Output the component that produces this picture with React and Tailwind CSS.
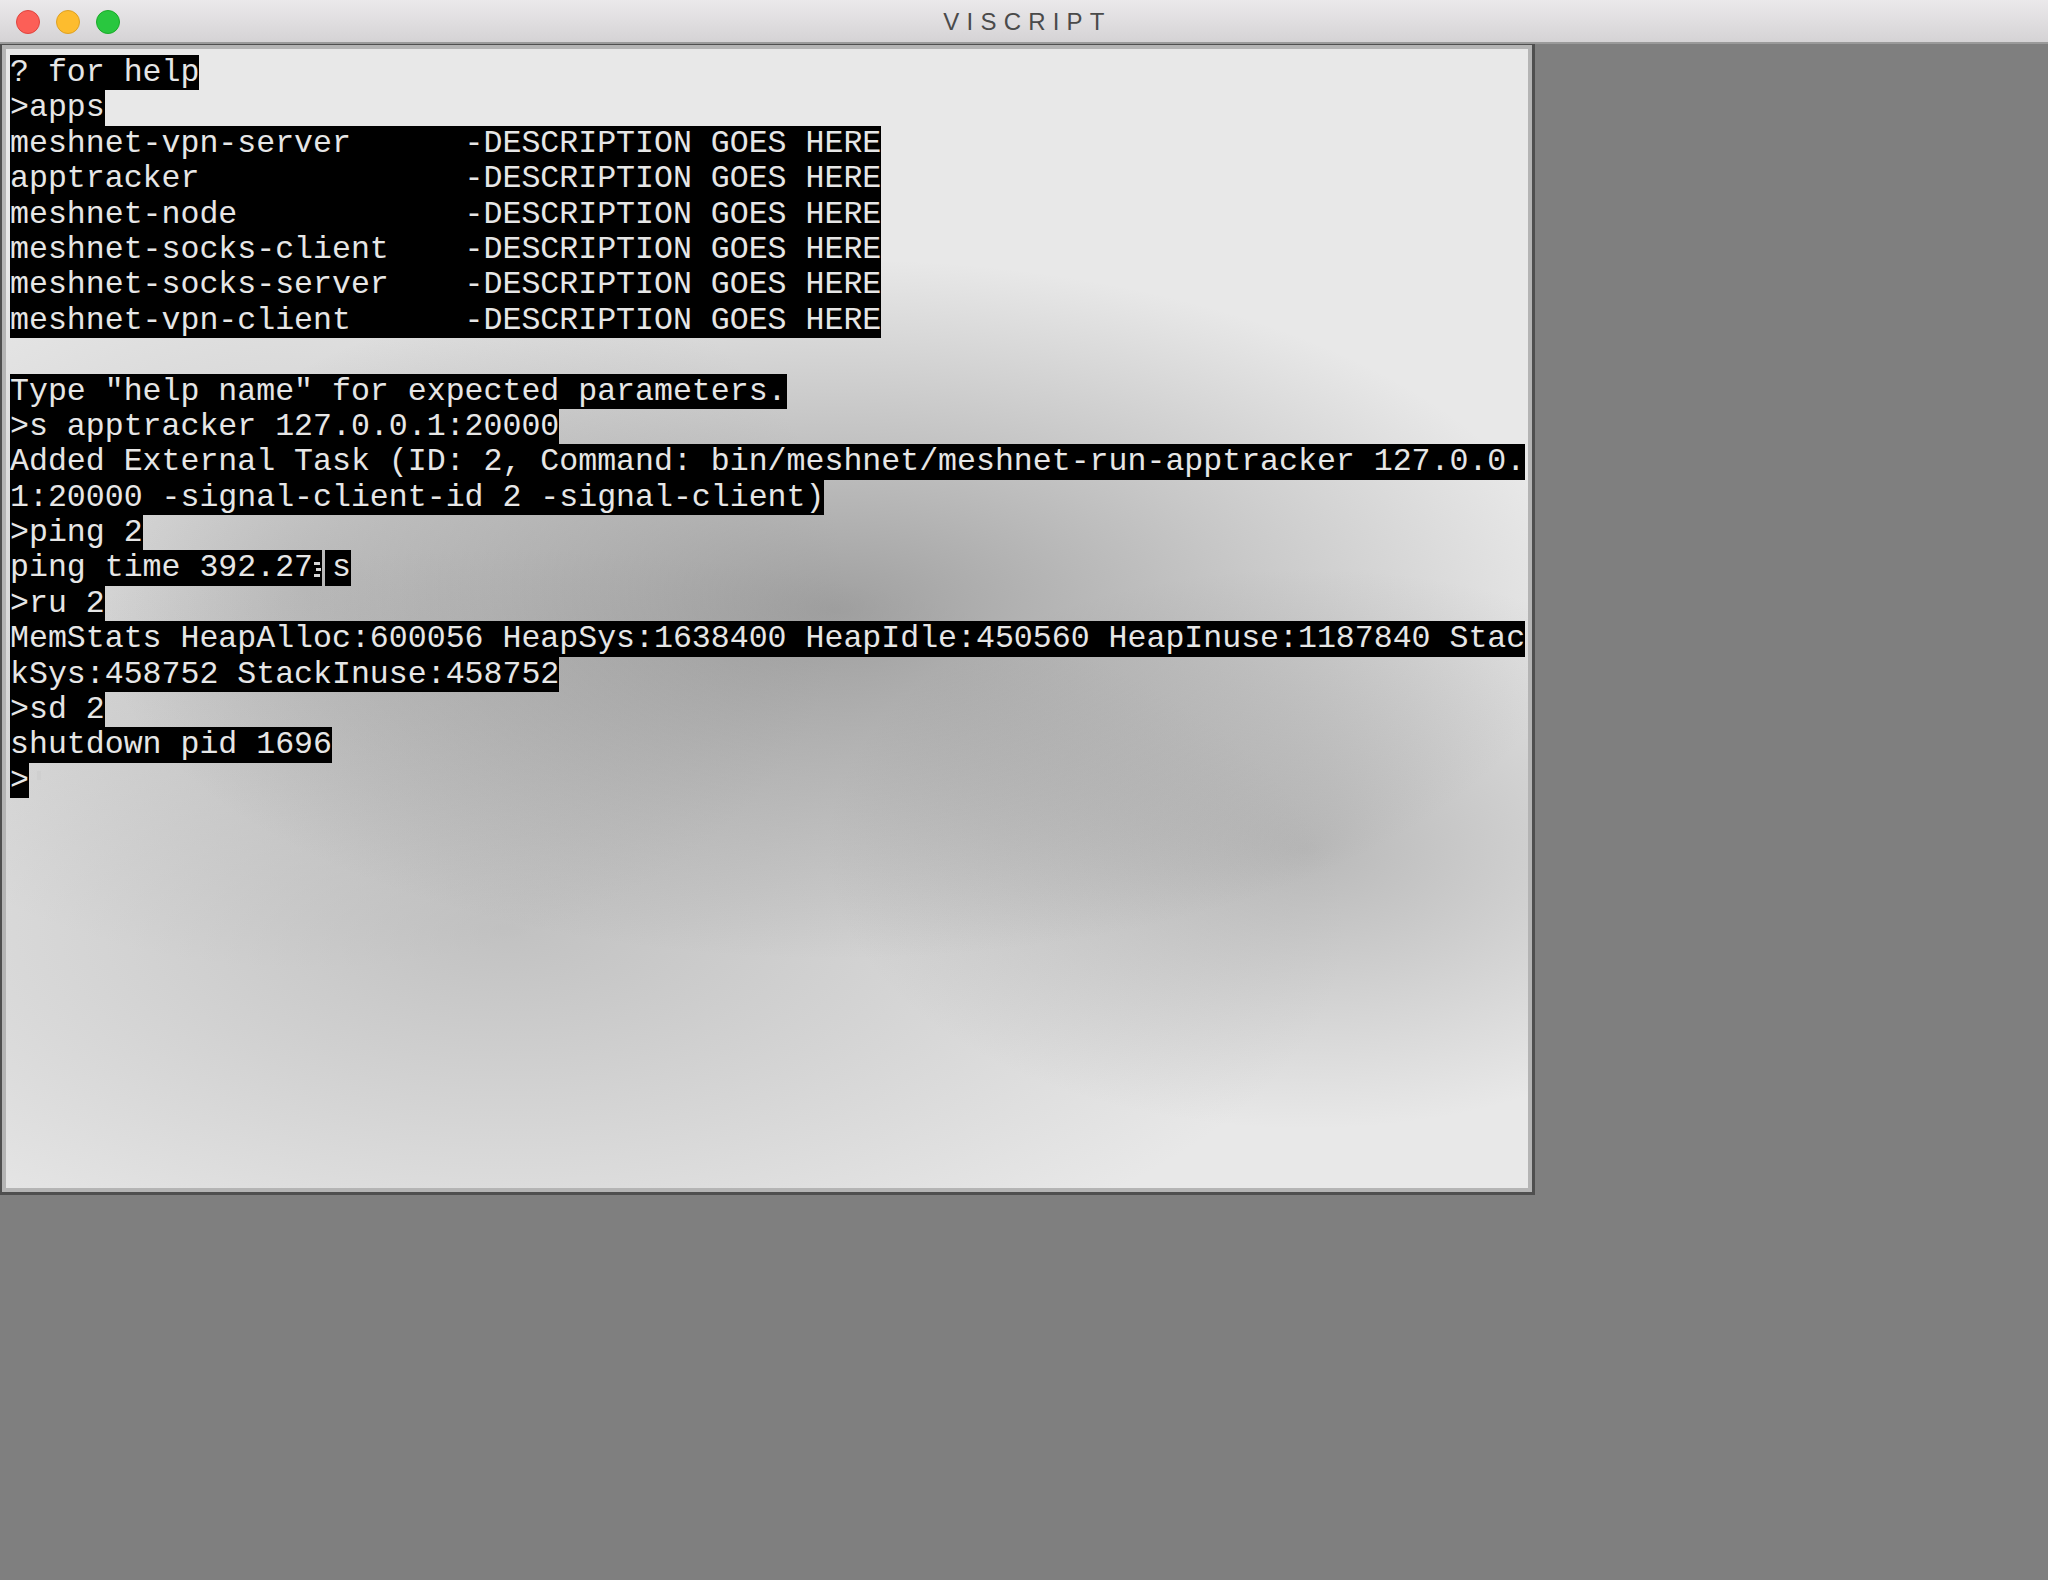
import React from "react";

const mono = "font-['Liberation_Mono','DejaVu_Sans_Mono',monospace]";

const pad = (s, n) => s + " ".repeat(Math.max(0, n - s.length));

const apps = [
  "meshnet-vpn-server",
  "apptracker",
  "meshnet-node",
  "meshnet-socks-client",
  "meshnet-socks-server",
  "meshnet-vpn-client",
];

function Line({ children }) {
  return <div className="h-[35.4px] flex items-stretch">{children}</div>;
}

function Hi({ children }) {
  return (
    <span className="inline-block bg-black text-[#e6e6e6] whitespace-pre leading-[35.4px] h-full">
      {children}
    </span>
  );
}

export default function App() {
  const lines = [
    "? for help",
    ">apps",
    ...apps.map((a) => pad(a, 24) + "-DESCRIPTION GOES HERE"),
    null,
    'Type "help name" for expected parameters.',
    ">s apptracker 127.0.0.1:20000",
    "Added External Task (ID: 2, Command: bin/meshnet/meshnet-run-apptracker 127.0.0.",
    "1:20000 -signal-client-id 2 -signal-client)",
    ">ping 2",
    "PING",
    ">ru 2",
    "MemStats HeapAlloc:600056 HeapSys:1638400 HeapIdle:450560 HeapInuse:1187840 Stac",
    "kSys:458752 StackInuse:458752",
    ">sd 2",
    "shutdown pid 1696",
    "CURSOR",
  ];

  return (
    <div className="w-[2048px] h-[1580px] bg-[#7f7f7f] flex flex-col overflow-hidden">
      {/* title bar */}
      <div className="h-[44px] w-full shrink-0 bg-gradient-to-b from-[#ebe9eb] to-[#d5d3d5] border-b-[2px] border-[#9a9a9a] relative flex items-center justify-center">
        <div className="absolute left-[16px] top-[10px] flex gap-[16px]">
          <div className="w-[24px] h-[24px] rounded-full bg-[#fc5f57] border border-[#e0443e]" />
          <div className="w-[24px] h-[24px] rounded-full bg-[#fdbc2e] border border-[#dea123]" />
          <div className="w-[24px] h-[24px] rounded-full bg-[#29c73f] border border-[#1aab29]" />
        </div>
        <span className="text-[24px] tracking-[0.3em] text-[#4a4a4a] font-['Liberation_Sans',Arial,sans-serif] pl-[7px] pt-[2px]">
          VISCRIPT
        </span>
      </div>

      {/* terminal panel */}
      <div className="w-[1535px] h-[1151px] shrink-0 border-t-[1px] border-r-[3px] border-b-[3px] border-l-[2px] border-[#4f4f4f] bg-[#7f7f7f]">
        <div className="w-full h-full border-[4px] border-[#b4b4b4] bg-[#e8e8e8] bg-[radial-gradient(740px_350px_at_830px_560px,rgba(100,100,100,0.55),rgba(100,100,100,0)),radial-gradient(480px_280px_at_1300px_800px,rgba(120,120,120,0.42),rgba(120,120,120,0)),radial-gradient(840px_380px_at_500px_880px,rgba(140,140,140,0.42),rgba(140,140,140,0)),radial-gradient(540px_380px_at_300px_540px,rgba(150,150,150,0.38),rgba(150,150,150,0))] pl-[4px] pt-[6px]">
          <div className={`${mono} text-[31.57px]`}>
            {lines.map((l, i) => {
              if (l === null) return <Line key={i} />;
              if (l === "PING")
                return (
                  <Line key={i}>
                    <Hi>ping time 392.27</Hi>
                    <span className="inline-block h-full w-[9px] bg-black relative">
                      <span className="absolute left-[1px] top-[12px] w-[6px] h-[3px] bg-[#d8d8d8]" />
                      <span className="absolute left-[3px] top-[18px] w-[5px] h-[3px] bg-[#d8d8d8]" />
                      <span className="absolute left-[1px] top-[24px] w-[6px] h-[3px] bg-[#d8d8d8]" />
                    </span>
                    <span className="inline-block h-full w-[3px]" />
                    <span className="inline-block h-full w-[7px] bg-black" />
                    <Hi>s</Hi>
                  </Line>
                );
              if (l === "CURSOR")
                return (
                  <Line key={i}>
                    <Hi>{">"}</Hi>
                    <span className="inline-block w-[4px] h-[9px] bg-[#cfcfcf] ml-[8px] mt-[8px]" />
                  </Line>
                );
              return (
                <Line key={i}>
                  <Hi>{l}</Hi>
                </Line>
              );
            })}
          </div>
        </div>
      </div>
    </div>
  );
}
